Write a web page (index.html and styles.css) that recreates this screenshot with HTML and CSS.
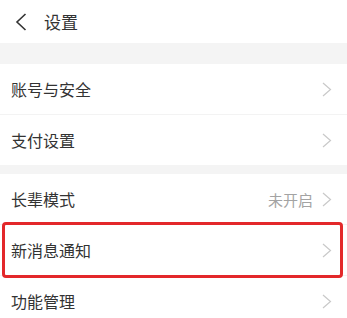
FILE: index.html
```html
<!DOCTYPE html>
<html lang="zh-CN">
<head>
  <meta charset="UTF-8">
  <title>设置</title>
  <link rel="stylesheet" href="styles.css">
</head>
<body>

  <header class="topbar">
    <svg class="back" width="12" height="18" viewBox="0 0 12 18">
      <path d="M10.5 1 L2 9 L10.5 17" fill="none" stroke="#333" stroke-width="1.6" stroke-linejoin="miter"/>
    </svg>
    <span class="title">设置</span>
  </header>

  <div class="spacer spacer-big"></div>

  <section class="group">
    <div class="row">
      <span class="label">账号与安全</span>
      <span class="right"><svg class="arrow" width="10" height="15" viewBox="0 0 10 15"><path d="M1 1 L8.5 7.5 L1 14" fill="none" stroke="#c9c9c9" stroke-width="1.2"/></svg></span>
    </div>
    <div class="row">
      <span class="label">支付设置</span>
      <span class="right"><svg class="arrow" width="10" height="15" viewBox="0 0 10 15"><path d="M1 1 L8.5 7.5 L1 14" fill="none" stroke="#c9c9c9" stroke-width="1.2"/></svg></span>
    </div>
  </section>

  <div class="spacer spacer-small"></div>

  <section class="group">
    <div class="row">
      <span class="label">长辈模式</span>
      <span class="right"><span class="value">未开启</span><svg class="arrow" width="10" height="15" viewBox="0 0 10 15"><path d="M1 1 L8.5 7.5 L1 14" fill="none" stroke="#c9c9c9" stroke-width="1.2"/></svg></span>
    </div>
    <!-- 标注框 -->
    <div class="row highlight">
      <span class="label">新消息通知</span>
      <span class="right"><svg class="arrow" width="10" height="15" viewBox="0 0 10 15"><path d="M1 1 L8.5 7.5 L1 14" fill="none" stroke="#c9c9c9" stroke-width="1.2"/></svg></span>
    </div>
    <div class="row">
      <span class="label">功能管理</span>
      <span class="right"><svg class="arrow" width="10" height="15" viewBox="0 0 10 15"><path d="M1 1 L8.5 7.5 L1 14" fill="none" stroke="#c9c9c9" stroke-width="1.2"/></svg></span>
    </div>
  </section>

</body>
</html>
```

FILE: styles.css
```css
/* Reset */
* {
  margin: 0;
  padding: 0;
  box-sizing: border-box;
}

body {
  background: #ffffff;
  font-family: "Noto Sans CJK SC", "Noto Sans", sans-serif;
  color: #333;
  overflow: hidden;
}

.topbar {
  height: 43px;
  display: flex;
  align-items: center;
  padding-left: 15px;
}

.back {
  display: block;
  margin-right: 17px;
}

.title {
  font-size: 17px;
  line-height: 1;
  color: #333;
}

.spacer {
  background: #f4f4f4;
}

.spacer-big {
  height: 21px;
}

.spacer-small {
  height: 9px;
}

.group {
  background: #fff;
}

.row {
  height: 50px;
  display: flex;
  align-items: center;
  justify-content: space-between;
  padding: 0 15px 0 11px;
}

.row + .row {
  height: 51px;
  border-top: 1px solid #f3f3f3;
}

.label {
  font-size: 16px;
  color: #333;
}

.right {
  display: flex;
  align-items: center;
}

.value {
  font-size: 15px;
  color: #a3a3a3;
  margin-right: 9px;
}

.arrow {
  display: block;
}

.highlight {
  position: relative;
}

.highlight::after {
  content: "";
  position: absolute;
  top: -3px;
  bottom: -3px;
  left: 2px;
  right: 4px;
  border: 3px solid #e3282a;
  border-radius: 4px;
  z-index: 2;
}
```
